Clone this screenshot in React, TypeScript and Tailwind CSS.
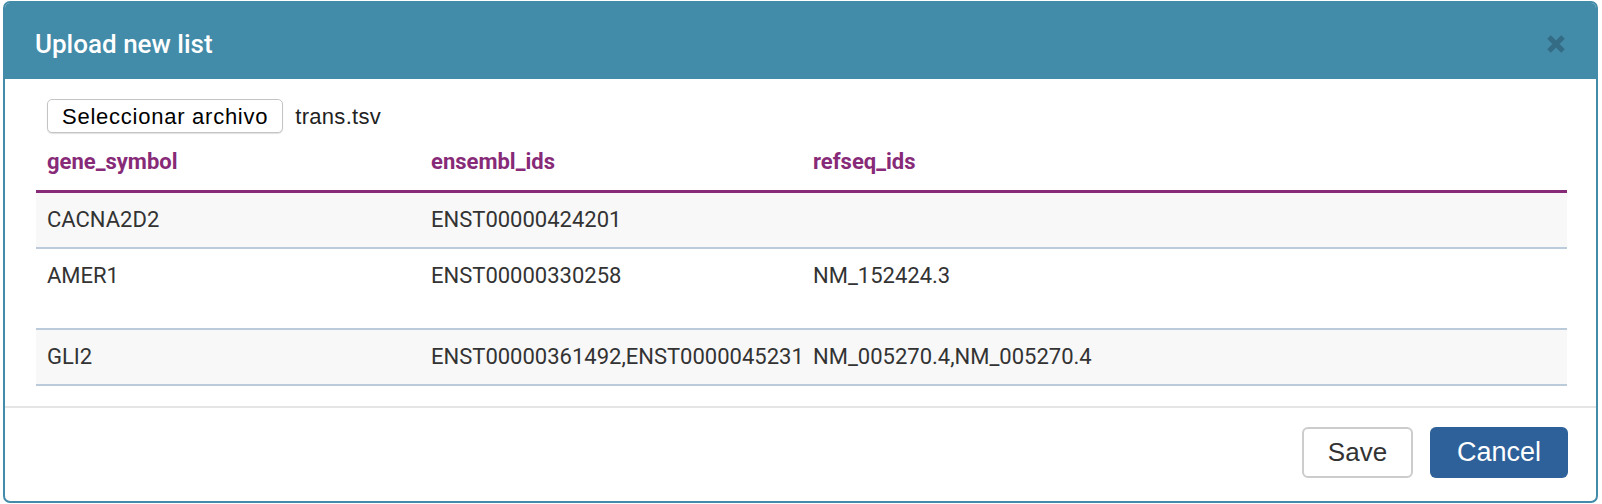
import React from "react";

const rows = [
  { gene: "CACNA2D2", ensembl: "ENST00000424201", refseq: "", tall: false, striped: true },
  { gene: "AMER1", ensembl: "ENST00000330258", refseq: "NM_152424.3", tall: true, striped: false },
  {
    gene: "GLI2",
    ensembl: "ENST00000361492,ENST0000045231",
    refseq: "NM_005270.4,NM_005270.4",
    tall: false,
    striped: true,
  },
];

export default function App() {
  return (
    <div className="w-[1602px] h-[504px] bg-white pt-px pl-[3px] font-['Roboto',sans-serif]">
      <div className="w-[1595px] h-[502px] border-2 border-[#428ba9] rounded-[7px] overflow-hidden flex flex-col bg-white">
        {/* header */}
        <div className="h-[77px] shrink-0 bg-[#428ba9] flex items-center justify-between pl-[30px] pr-[30px] -mt-px">
          <h1 className="text-white text-[26px] font-medium leading-none pt-[6px] font-['Roboto',sans-serif]">
            Upload new list
          </h1>
          <svg width="20" height="20" viewBox="0 0 20 20" className="mt-[6px]">
            <path d="M3 3 L17 17 M17 3 L3 17" stroke="rgba(0,0,0,0.22)" strokeWidth="5" strokeLinecap="butt" />
          </svg>
        </div>

        {/* body */}
        <div className="pt-[20px] pl-[31px] pr-[29px] pb-[20px]">
          <div className="flex items-center ml-[11px] h-[34px]">
            <button className="h-[34px] px-[14px] border border-[#c4c4c4] rounded-[5px] bg-white shadow-[0_1px_1px_rgba(0,0,0,0.12)] text-[22px] tracking-[0.75px] text-black font-['Liberation_Sans',sans-serif]">
              Seleccionar archivo
            </button>
            <span className="ml-[12px] text-[22px] tracking-[0.3px] text-[#222] font-['Liberation_Sans',sans-serif]">trans.tsv</span>
          </div>

          <div className="mt-[14px]">
            <div className="grid grid-cols-[384px_382px_1fr] border-b-[3px] border-[#872a78] pb-[13px] leading-[30px] text-[22px] font-bold text-[#872a78]">
              <div className="px-[11px]">gene_symbol</div>
              <div className="px-[11px]">ensembl_ids</div>
              <div className="px-[11px]">refseq_ids</div>
            </div>
            {rows.map((r) => (
              <div
                key={r.gene}
                className={
                  "grid grid-cols-[384px_382px_1fr] border-b-2 border-[#bccbdc] text-[22px] leading-[30px] text-[#333] whitespace-nowrap " +
                  (r.striped ? "bg-[#f8f8f8] " : "bg-white ") +
                  (r.tall ? "pt-[12px] pb-[37px]" : "pt-[12px] pb-[12px]")
                }
              >
                <div className="px-[11px]">{r.gene}</div>
                <div className="px-[11px]">{r.ensembl}</div>
                <div className="px-[11px]">{r.refseq}</div>
              </div>
            ))}
          </div>
        </div>

        {/* footer */}
        <div className="border-t-2 border-[#e5e5e5] flex justify-end gap-[17px] pt-[19px] pr-[28px]">
          <button className="w-[111px] h-[51px] border-2 border-[#cccccc] rounded-[6px] bg-white text-[26px] text-[#333] font-['Liberation_Sans',sans-serif]">
            Save
          </button>
          <button className="w-[138px] h-[51px] rounded-[6px] bg-[#2e6199] text-[27px] text-white font-['Liberation_Sans',sans-serif]">
            Cancel
          </button>
        </div>
      </div>
    </div>
  );
}
